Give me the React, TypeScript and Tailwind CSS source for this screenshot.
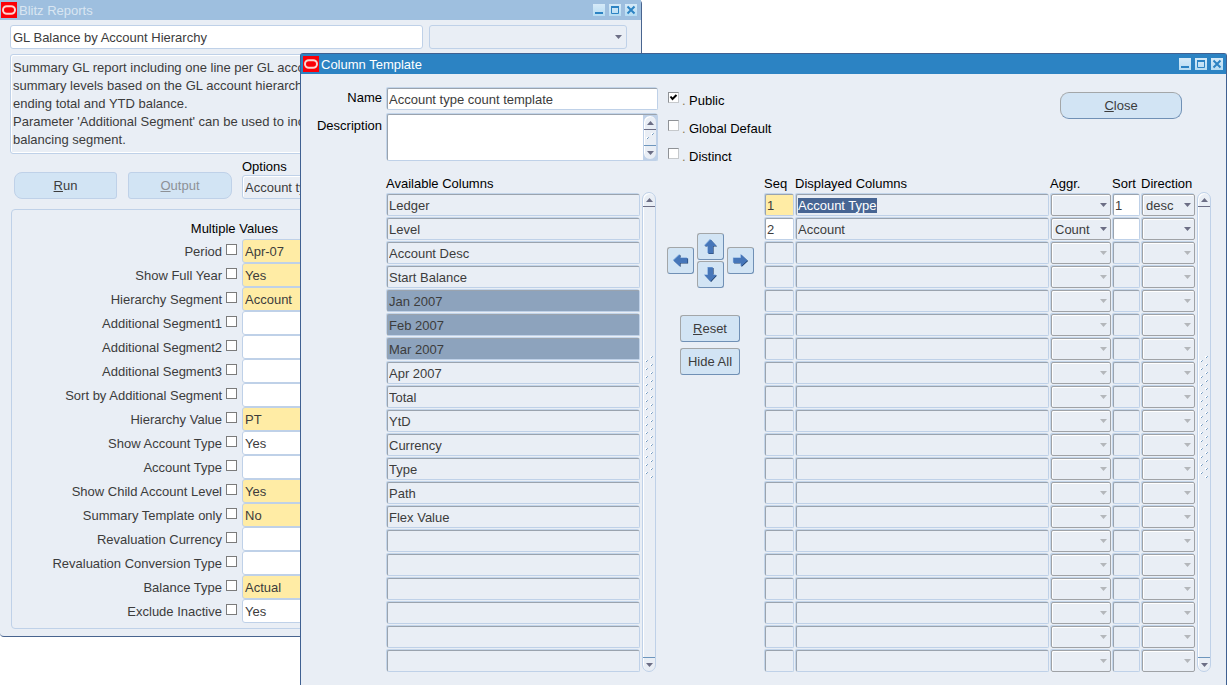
import { useEffect, useRef } from "react";

const parameters = [
  { label: "Period", value: "Apr-07", required: true },
  { label: "Show Full Year", value: "Yes", required: true },
  { label: "Hierarchy Segment", value: "Account", required: true },
  { label: "Additional Segment1", value: "", required: false },
  { label: "Additional Segment2", value: "", required: false },
  { label: "Additional Segment3", value: "", required: false },
  { label: "Sort by Additional Segment", value: "", required: false },
  { label: "Hierarchy Value", value: "PT", required: true },
  { label: "Show Account Type", value: "Yes", required: false },
  { label: "Account Type", value: "", required: false },
  { label: "Show Child Account Level", value: "Yes", required: true },
  { label: "Summary Template only", value: "No", required: true },
  { label: "Revaluation Currency", value: "", required: false },
  { label: "Revaluation Conversion Type", value: "", required: false },
  { label: "Balance Type", value: "Actual", required: true },
  { label: "Exclude Inactive", value: "Yes", required: false },
];

const description = [
  "Summary GL report including one line per GL account",
  "summary levels based on the GL account hierarchy",
  "ending total and YTD balance.",
  "Parameter 'Additional Segment' can be used to include",
  "balancing segment.",
].join("\n");

const ROWS = 20;

const available = [
  "Ledger", "Level", "Account Desc", "Start Balance", "Jan 2007", "Feb 2007", "Mar 2007",
  "Apr 2007", "Total", "YtD", "Currency", "Type", "Path", "Flex Value",
];
const selected = ["Jan 2007", "Feb 2007", "Mar 2007"];

const displayed = [
  { seq: "1", name: "Account Type", aggr: "", sort: "1", direction: "desc" },
  { seq: "2", name: "Account", aggr: "Count", sort: "", direction: "" },
];

const field = "block w-full min-w-0 rounded-[3px] border border-[#bfd1e8] px-[2px] outline-none";
const cell =
  "block h-[22px] w-full min-w-0 rounded-[2px] border border-t-[#9aa3ae] border-l-[#9aa3ae] border-r-[#bfd1e8] border-b-[#bfd1e8] px-[1px] leading-[18px] shadow-[-1px_-1px_0_#c3d5ea] outline-none selection:bg-[#476593] selection:text-white";

const Logo = () => (
  <svg width="16" height="16" viewBox="0 0 16 16" className="shrink-0">
    <rect width="16" height="16" fill="#fb0007" />
    <rect x="2" y="4.2" width="12" height="7.6" rx="3.8" fill="none" stroke="#fbd5d2" strokeWidth="2" />
  </svg>
);

const WindowButton = ({ kind }: { kind: "Minimize" | "Maximize" | "Close" }) => (
  <button type="button" aria-label={kind} className="size-3 bg-gradient-to-b from-[#d6eaf8] to-[#b5dcf3]">
    <svg width="12" height="12" viewBox="0 0 12 12" fill="none" stroke="#2c83c3" strokeWidth="2">
      {kind === "Minimize" && <path d="M2 9h8" />}
      {kind === "Maximize" && (
        <>
          <path d="M2 3h8" />
          <path d="M2.5 3v6.5h7V3" strokeWidth="1" />
        </>
      )}
      {kind === "Close" && <path d="M2.5 2.5l7 7M9.5 2.5l-7 7" />}
    </svg>
  </button>
);

const TitleBar = ({ title, className }: { title: string; className: string }) => (
  <header className={`flex h-5 items-center gap-[2px] ${className}`}>
    <Logo />
    <h1 className="flex-1 pt-[2px] leading-[18px]">{title}</h1>
    <div className="flex gap-1">
      <WindowButton kind="Minimize" />
      <WindowButton kind="Maximize" />
      <WindowButton kind="Close" />
    </div>
  </header>
);

const Triangle = ({ up = false, color = "#6c6e85" }: { up?: boolean; color?: string }) => (
  <svg width="7" height="4" viewBox="0 0 7 4" fill={color}>
    {up ? <path d="M0 4L3.5 0L7 4z" /> : <path d="M0 0L3.5 4L7 0z" />}
  </svg>
);

const DropDown = ({ label, value, muted = false }: { label: string; value: string; muted?: boolean }) => (
  <div className="relative">
    <select
      aria-label={label}
      defaultValue={value}
      disabled={muted}
      className="block h-[22px] w-full appearance-none rounded-[2px] border border-[#9fa2a6] bg-[#e9eef5] pt-[1px] pl-[3px] leading-[18px] shadow-[-1px_-1px_0_#c3d5ea,inset_1px_1px_0_#ffffff] outline-none"
    >
      <option value={value}>{value}</option>
    </select>
    <span className="pointer-events-none absolute top-[9px] right-[4px]">
      <Triangle color={muted ? "#b4b7bb" : "#6c6e85"} />
    </span>
  </div>
);

const Grip = ({ rows }: { rows: number }) => (
  <svg width="10" height={rows * 4 + 2} viewBox={`0 0 10 ${rows * 4 + 2}`} shapeRendering="crispEdges">
    {Array.from({ length: rows }, (_, i) => {
      const x = i % 2 === 0 ? 6 : 1;
      return (
        <g key={i}>
          <rect x={x} y={i * 4} width="2" height="2" fill="#fff" />
          <rect x={x + 1} y={i * 4 + 1} width="1" height="1" fill="#6e96bd" />
          <rect x={x + 2} y={i * 4} width="1" height="1" fill="#8fb0d0" />
        </g>
      );
    })}
  </svg>
);

const ScrollBar = ({ rows, className = "", gripClassName = "" }: { rows: number; className?: string; gripClassName?: string }) => (
  <div
    className={`flex w-[14px] shrink-0 flex-col items-center rounded-full border border-[#bfd1e8] bg-[#e9eef5] shadow-[inset_1px_1px_0_#ffffff] ${className}`}
  >
    <button type="button" aria-label="Scroll up" className="flex h-[14px] w-full shrink-0 items-center justify-center border-b border-[#6c6e85]">
      <Triangle up />
    </button>
    <div className={`flex flex-1 items-center ${gripClassName}`}>
      <Grip rows={rows} />
    </div>
    <button type="button" aria-label="Scroll down" className="flex h-[14px] w-full shrink-0 items-center justify-center border-t border-[#6e96bd]">
      <Triangle />
    </button>
  </div>
);

// the bevel keeps its light in the top left whichever way the arrow points
const arrows = {
  up: "M8.5 1.5L14.5 8H11V15.5H6V8H2.5z",
  down: "M8.5 15.5L2.5 9H6V1.5H11V9H14.5z",
  left: "M1.5 8.5L8 2.5V6H15.5V11H8V14.5z",
  right: "M15.5 8.5L9 14.5V11H1.5V6H9V2.5z",
};

const ArrowButton = ({ label, to }: { label: string; to: keyof typeof arrows }) => (
  <button
    type="button"
    aria-label={label}
    className="flex size-[27px] items-center justify-center rounded-[3px] border border-t-[#a3a6a8] border-l-[#a3a6a8] border-r-[#7090b5] border-b-[#7090b5] bg-[#d2e4f4]"
  >
    <svg width="17" height="17" viewBox="0 0 17 17">
      <path d={arrows[to]} fill="#1f3d69" transform="translate(.6 .6)" />
      <path d={arrows[to]} fill="#7aa6dc" transform="translate(-.6 -.6)" />
      <path d={arrows[to]} fill="#4676b9" />
    </svg>
  </button>
);

const BlitzReports = () => (
  <section className="absolute top-0 left-0 w-[642px] rounded-sm border-r border-b border-[#48648f] bg-[#e9eef5]">
    <TitleBar title="Blitz Reports" className="bg-[#9ebfdf] pr-1 pl-[1px] text-[#d9e6f2]" />
    <div className="pt-[5px] pr-[14px] pb-[7px] pl-[10px]">
      <div className="flex gap-[6px]">
        <input aria-label="Report" defaultValue="GL Balance by Account Hierarchy" className={`${field} h-6 flex-1 bg-white`} />
        <div className="relative w-[198px]">
          <select aria-label="Category" className={`${field} h-6 appearance-none bg-[#e9eef5]`} />
          <span className="pointer-events-none absolute top-[10px] right-[5px]">
            <Triangle />
          </span>
        </div>
      </div>
      <textarea
        aria-label="Report description"
        readOnly
        value={description}
        className={`${field} mt-[5px] h-[100px] resize-none overflow-hidden py-1 leading-[18px] shadow-[inset_1px_1px_0_#ffffff,inset_-1px_-1px_0_#ffffff]`}
      />
      <div className="mt-[5px] flex items-end pl-1">
        <button type="button" className="h-[27px] w-[103px] rounded-l-[8px] rounded-r-[3px] border border-[#bfd1e8] bg-[#d2e4f4]">
          <span className="underline">R</span>un
        </button>
        <button type="button" disabled className="ml-[11px] h-[27px] w-[104px] rounded-l-[3px] rounded-r-[8px] border border-[#bfd1e8] bg-[#d2e4f4] text-[#8d9196]">
          <span className="underline">O</span>utput
        </button>
        <label className="ml-[10px] flex-1 leading-4 text-black">
          Options
          <input defaultValue="Account type count template" className={`${field} h-6 text-[#3c3c3c] shadow-[inset_1px_1px_0_#ffffff]`} />
        </label>
      </div>
      <div className="mt-[10px] ml-[1px] rounded-[4px] border border-[#bfd1e8] px-[1px] pt-[11px] pb-[5px]">
        <p className="w-[265px] pb-[2px] text-right leading-4 text-black">Multiple Values</p>
        {parameters.map((p) => (
          <div key={p.label} className="flex h-6 items-center">
            <label htmlFor={p.label} className="w-[209px] pt-[1px] text-right">
              {p.label}
            </label>
            <input
              type="checkbox"
              aria-label={`${p.label} multiple values`}
              className="mr-[5px] mb-[4px] ml-[4px] size-[11px] appearance-none border border-[#7b7b7b] bg-white"
            />
            <input id={p.label} defaultValue={p.value} className={`${field} h-6 flex-1 ${p.required ? "bg-[#ffeca5]" : "bg-white"}`} />
          </div>
        ))}
      </div>
    </div>
  </section>
);

const Check = ({ label, checked = false }: { label: string; checked?: boolean }) => (
  <label className="flex items-start text-black">
    <span className="relative">
      <input
        type="checkbox"
        defaultChecked={checked}
        className="peer block size-[11px] appearance-none border border-t-[#8f9296] border-l-[#8f9296] border-r-[#c6c9cc] border-b-[#c6c9cc] bg-white"
      />
      <svg viewBox="0 0 11 11" className="pointer-events-none absolute inset-0 hidden size-[11px] peer-checked:block">
        <path d="M2.5 4.5L4.5 7L8.5 3" fill="none" stroke="#000" strokeWidth="2" />
      </svg>
    </span>
    <span className="w-[10px] pt-[1px] pl-[3px] leading-4 text-[#8b7d55]">.</span>
    <span className="pt-[1px] leading-4">{label}</span>
  </label>
);

const AvailableColumns = () => (
  <table className="w-[254px] border-separate border-spacing-0">
    <thead>
      <tr>
        <th className="h-[18px] p-0 text-left align-top leading-4 font-normal text-black">Available Columns</th>
      </tr>
    </thead>
    <tbody>
      {Array.from({ length: ROWS }, (_, i) => (
        <tr key={i}>
          <td className="h-6 p-0 pl-[1px] align-top">
            <input
              aria-label={`Available column ${i + 1}`}
              readOnly
              value={available[i] ?? ""}
              className={`${cell} ${selected.includes(available[i]) ? "bg-[#8da3bd]" : "bg-[#e9eef5]"}`}
            />
          </td>
        </tr>
      ))}
    </tbody>
  </table>
);

const DisplayedColumns = () => {
  const current = useRef<HTMLInputElement>(null);

  useEffect(() => {
    current.current?.focus();
    current.current?.select();
  }, []);

  return (
    <table className="min-w-0 flex-1 table-fixed border-separate border-spacing-0">
      <colgroup>
        <col className="w-[31px]" />
        <col />
        <col className="w-[62px]" />
        <col className="w-[29px]" />
        <col className="w-[55px]" />
      </colgroup>
      <thead>
        <tr className="h-[18px] text-left align-top leading-4 whitespace-nowrap text-black">
          <th className="p-0 font-normal">Seq</th>
          <th className="p-0 font-normal">Displayed Columns</th>
          <th className="p-0 font-normal">Aggr.</th>
          <th className="p-0 font-normal">Sort</th>
          <th className="p-0 font-normal">Direction</th>
        </tr>
      </thead>
      <tbody>
        {Array.from({ length: ROWS }, (_, i) => {
          const row = displayed[i];
          const edit = row ? "bg-white" : "bg-[#e9eef5]";
          return (
            <tr key={i} className="h-6 align-top">
              <td className="px-[1px] py-0">
                <input aria-label={`Seq ${i + 1}`} defaultValue={row?.seq} className={`${cell} ${i === 0 ? "bg-[#ffeca5]" : edit}`} />
              </td>
              <td className="px-[1px] py-0">
                <input ref={i === 0 ? current : null} aria-label={`Displayed column ${i + 1}`} defaultValue={row?.name} className={`${cell} bg-[#e9eef5]`} />
              </td>
              <td className="px-[1px] py-0">
                <DropDown label={`Aggregation ${i + 1}`} value={row?.aggr ?? ""} muted={!row} />
              </td>
              <td className="px-[1px] py-0">
                <input aria-label={`Sort ${i + 1}`} defaultValue={row?.sort} className={`${cell} ${edit}`} />
              </td>
              <td className="px-[1px] py-0">
                <DropDown label={`Direction ${i + 1}`} value={row?.direction ?? ""} muted={!row} />
              </td>
            </tr>
          );
        })}
      </tbody>
    </table>
  );
};

const smallButton =
  "h-[27px] w-[60px] rounded-[3px] border border-t-[#a3a6a8] border-l-[#a3a6a8] border-r-[#7090b5] border-b-[#7090b5] bg-[#d2e4f4]";

const ColumnTemplate = () => (
  <section className="absolute top-[53px] right-0 left-[300px] rounded-[3px] border-t border-r border-l border-[#3f6091] bg-[#e9eef5]">
    <TitleBar title="Column Template" className="bg-[#2c83c3] pr-[3px] pl-[2px] text-white" />
    <div className="pr-[15px] pb-[15px]">
      <div className="flex items-start pt-[14px]">
        <div className="grid grid-cols-[81px_271px] gap-x-[5px] gap-y-[4px]">
          <label htmlFor="template-name" className="pt-[2px] text-right leading-4 text-black">
            Name
          </label>
          <input id="template-name" defaultValue="Account type count template" className={`${cell} bg-white`} />
          <label htmlFor="template-description" className="pt-[4px] text-right leading-4 text-black">
            Description
          </label>
          <div className="flex h-[47px] rounded-[2px] border border-t-[#9aa3ae] border-l-[#9aa3ae] border-r-[#bfd1e8] border-b-[#bfd1e8] bg-white shadow-[-1px_-1px_0_#c3d5ea]">
            <textarea id="template-description" className="min-w-0 flex-1 resize-none outline-none" />
            <div className="flex bg-[#bfd1e8]">
              <ScrollBar rows={2} />
            </div>
          </div>
        </div>
        <div className="mt-1 ml-[10px] flex flex-col gap-[11px]">
          <Check label="Public" checked />
          <Check label="Global Default" />
          <Check label="Distinct" />
        </div>
        <button type="button" className="mt-1 mr-[29px] ml-auto h-[27px] w-[122px] rounded-[9px] border border-t-[#a3a6a8] border-l-[#a3a6a8] border-r-[#7090b5] border-b-[#7090b5] bg-[#d2e4f4]">
          <span className="underline">C</span>lose
        </button>
      </div>
      <div className="flex pt-[11px] pl-[85px]">
        <AvailableColumns />
        <ScrollBar rows={31} className="mt-[16px] mb-[2px] ml-[2px]" gripClassName="pb-[26px]" />
        <div className="flex w-[108px] shrink-0 flex-col items-center pt-[57px]">
          <div className="flex items-center gap-[3px]">
            <ArrowButton label="Remove" to="left" />
            <div className="flex flex-col gap-[1px]">
              <ArrowButton label="Move up" to="up" />
              <ArrowButton label="Move down" to="down" />
            </div>
            <ArrowButton label="Add" to="right" />
          </div>
          <button type="button" className={`${smallButton} mt-[27px]`}>
            <span className="underline">R</span>eset
          </button>
          <button type="button" className={`${smallButton} mt-[6px]`}>
            Hide All
          </button>
        </div>
        <DisplayedColumns />
        <ScrollBar rows={31} className="mt-[16px] mb-[2px] ml-[1px]" gripClassName="pb-[26px]" />
      </div>
    </div>
  </section>
);

export default function App() {
  return (
    <main className="relative min-h-screen overflow-hidden bg-white font-['Liberation_Sans',Arial,sans-serif] text-[13px] text-[#3c3c3c]">
      <BlitzReports />
      <ColumnTemplate />
    </main>
  );
}
